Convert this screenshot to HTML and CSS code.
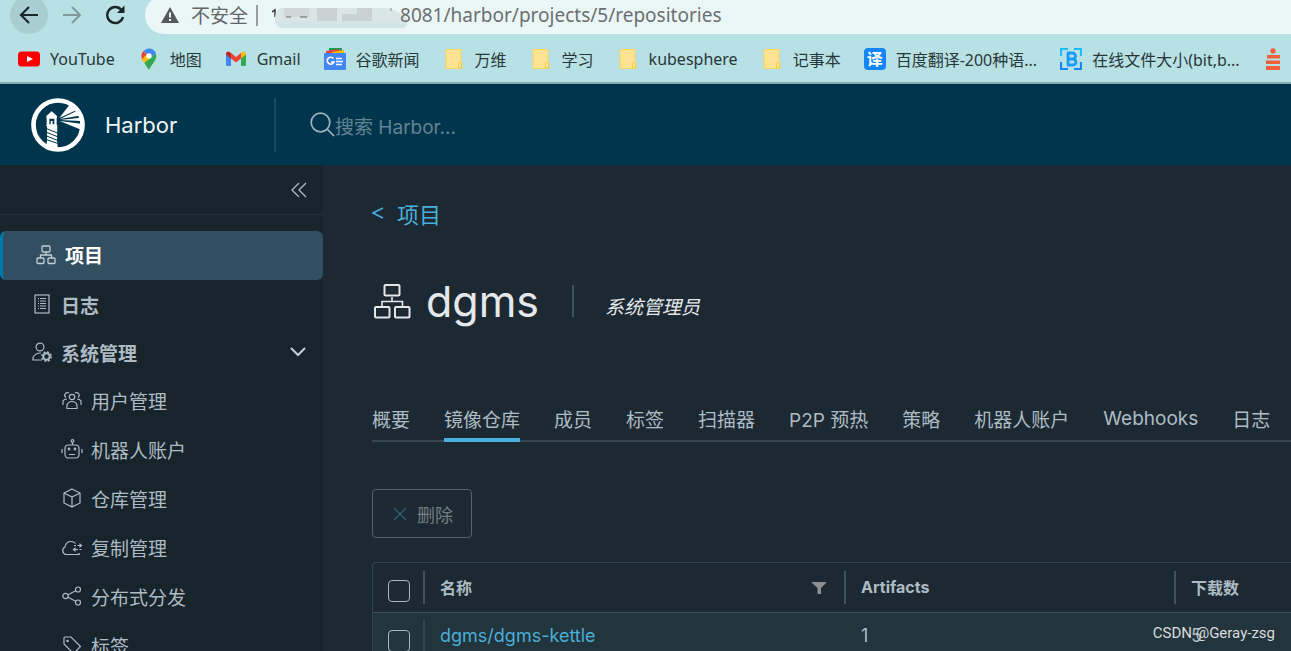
FILE: index.html
```html
<!DOCTYPE html>
<html lang="zh-CN">
<head>
<meta charset="utf-8">
<title>Harbor</title>
<link rel="stylesheet" href="styles.css">
</head>
<body>
<div class="browser">
  <div class="toolbar">
    <button class="nav-btn nav-btn-active" aria-label="后退"><svg width="20" height="20" viewBox="0 0 20 20" fill="none" stroke="#1c2527" stroke-width="2.2"><path d="M19 10H2M10 2L2 10l8 8"/></svg></button>
    <button class="nav-btn" aria-label="前进"><svg width="20" height="20" viewBox="0 0 20 20" fill="none" stroke="#82999c" stroke-width="2"><path d="M1 10h17M10 2l8 8-8 8"/></svg></button>
    <button class="nav-btn" aria-label="重新加载"><svg width="20" height="20" viewBox="0 0 20 20" fill="none" stroke="#1c2527" stroke-width="2.4"><path d="M16.500 5A8 8 0 1 0 18 12"/><path d="M19.500 0.500V8h-7.500z" fill="#1c2527" stroke="none"/></svg></button>
    <div class="address">
      <svg width="18" height="16" viewBox="0 0 18 16"><path d="M9 0l9 16H0z" fill="#55595a"/><path d="M9 5.500v5M9 12v2" stroke="#ebf7f7" stroke-width="2"/></svg>
      <span class="insecure">不安全</span>
      <span class="bar"></span>
      <svg class="mask" width="136" height="24" viewBox="0 0 136 24"><path d="M0 7l3-2v7" fill="none" stroke="#333" stroke-width="1.500"/><path d="M10 3h107l16 8q3 3 2 8-1 4-5 4H10q-7-1-7-10 0-8 7-10z" fill="#dae5e6"/><path d="M45 3h20v13H45zM85 3h15v13H70V9h15z" fill="#c9d1d3"/><path d="M12 3h25v9H12z" fill="#d0d8da"/><path d="M3 16h132q0 7-5 7H10q-6 0-7-7z" fill="#d4e5e7"/><path d="M14 12h5M28 12h7" stroke="#666" stroke-width="1"/><path d="M119 3v3" stroke="#888"/></svg>
      <span class="url">8081/harbor/projects/5/repositories</span>
    </div>
  </div>
  <nav class="bookmarks">
    <a class="bookmark" href="#"><svg width="22" height="22" viewBox="0 0 22 22"><rect y="3.500" width="22" height="15" rx="3.500" fill="#f00"/><path d="M9 8l6 3-6 3z" fill="#fff"/></svg>YouTube</a>
    <a class="bookmark" href="#"><svg width="22" height="22" viewBox="0 0 22 22"><path d="M11 .5a7.500 7.500 0 0 1 7 4.800L12 10 8.500 6l-3-3Q8 .5 11 .5z" fill="#4285f4"/><path d="M5.300 3L9 7l-4.500 5A8 8 0 0 1 5.300 3z" fill="#ea4335"/><path d="M13.500 9.500L6.300 15Q4.700 13 4 11l5-5z" fill="#fbbc04"/><path d="M18 5.300Q19 9 17 12.500L12.500 19 11 22 6.300 15z" fill="#34a853"/><circle cx="11" cy="8" r="2.700" fill="#fff"/></svg>地图</a>
    <a class="bookmark" href="#"><svg width="22" height="22" viewBox="0 0 22 22"><path d="M1 6l5 3.500V18H2.500Q1 18 1 16.500z" fill="#4285f4"/><path d="M21 6l-5 3.500V18h3.500q1.500 0 1.500-1.500z" fill="#34a853"/><path d="M6 5l5 4 5-4v5.500l-5 4-5-4z" fill="#ea4335"/><path d="M1 6.500V5Q2.500 2 6 5v5.500z" fill="#c5221f"/><path d="M21 6.500V5q-1.500-3-5 0v5.500z" fill="#fbbc04"/></svg>Gmail</a>
    <a class="bookmark" href="#"><svg width="22" height="22" viewBox="0 0 22 22"><path d="M5 0h13v6H5z" fill="#0f9d58"/><path d="M2 3l13-2 2 6H2z" fill="#ea4335"/><path d="M8 4l12-2v5H8z" fill="#fbbc04"/><rect y="5" width="22" height="17" rx="1" fill="#4285f4"/><path d="M9.500 10.500A3.500 3.500 0 1 0 10 14H7M12 10.500h6M12 13.500h7M12 16.500h6" fill="none" stroke="#fff" stroke-width="1.600"/></svg>谷歌新闻</a>
    <a class="bookmark" href="#"><svg width="22" height="22" viewBox="0 0 22 22"><path d="M3 1.500h15v12l1 1v6H3z" fill="#fee391" stroke="#f5d568"/><path d="M15.500 20v-5q1.500-2 3 0v5z" fill="#fee391" stroke="#f0cb50"/></svg>万维</a>
    <a class="bookmark" href="#"><svg width="22" height="22" viewBox="0 0 22 22"><path d="M3 1.500h15v12l1 1v6H3z" fill="#fee391" stroke="#f5d568"/><path d="M15.500 20v-5q1.500-2 3 0v5z" fill="#fee391" stroke="#f0cb50"/></svg>学习</a>
    <a class="bookmark" href="#"><svg width="22" height="22" viewBox="0 0 22 22"><path d="M3 1.500h15v12l1 1v6H3z" fill="#fee391" stroke="#f5d568"/><path d="M15.500 20v-5q1.500-2 3 0v5z" fill="#fee391" stroke="#f0cb50"/></svg>kubesphere</a>
    <a class="bookmark" href="#"><svg width="22" height="22" viewBox="0 0 22 22"><path d="M3 1.500h15v12l1 1v6H3z" fill="#fee391" stroke="#f5d568"/><path d="M15.500 20v-5q1.500-2 3 0v5z" fill="#fee391" stroke="#f0cb50"/></svg>记事本</a>
    <a class="bookmark" href="#"><span class="translate-icon">译</span>百度翻译-200种语...</a>
    <a class="bookmark" href="#"><svg width="22" height="22" viewBox="0 0 22 22" fill="none" stroke-width="2.200"><path d="M1 8V1h7M14 1h7v7" stroke="#1cc0f8"/><path d="M1 14v7h7M14 21h7v-7" stroke="#1687fa"/><path d="M7 5h5.500a2.800 2.800 0 0 1 0 6H8M8 5v12M8 11h5a3 3 0 0 1 0 6H7" stroke="#189cf7" stroke-width="2.800"/></svg>在线文件大小(bit,b...</a>
    <a class="bookmark" href="#" aria-label="书签"><svg width="22" height="22" viewBox="0 0 22 22" fill="#f1603d"><circle cx="10" cy="3" r="2.700"/><path d="M4 7h13v3.500H4zM3 12.500h14V16H3zM3 18h14v4H3z"/></svg></a>
  </nav>
</div>

<header class="header">
  <a class="brand" href="#">
    <svg width="54" height="54" viewBox="94 39 162 162"><circle cx="175" cy="120" r="73.500" fill="none" stroke="#fff" stroke-width="14"/><g fill="#fff"><path d="M156 79l-16 14v5h32v-5z"/><path d="M141 96h30v24h2l-1 48 3 25h-37l4-25v-44l-4-4h3zM149 101v17h4v-10h6v10h5v-17z" fill-rule="evenodd"/><path d="M179 99l30-39 22 10-2 6z"/><path d="M181 102l50-24 7 14z"/><path d="M181 105l62-7v10z"/><path d="M180 108l64 8-3 17z"/></g><path d="M141 131l32 13M141 142l32 13M141 153l32 13M141 164l32 11" stroke="#00364d" stroke-width="3"/></svg>
    <span>Harbor</span>
  </a>
  <form class="search">
    <label for="q" aria-label="搜索"><svg width="25" height="25" viewBox="0 0 25 25" fill="none" stroke="#9fb3be" stroke-width="1.700"><circle cx="10.500" cy="10.500" r="9.300"/><path d="M17 17l7 7"/></svg></label>
    <input id="q" type="text" placeholder="搜索 Harbor...">
  </form>
</header>

<div class="layout">
  <aside class="sidebar">
    <div class="collapse"><button aria-label="收起"><svg width="16" height="16" viewBox="0 0 16 16" fill="none" stroke="#adbbc4" stroke-width="1.300"><path d="M8 1L1 8l7 7M15 1L8 8l7 7"/></svg></button></div>
    <nav class="menu">
      <a class="item active" href="#"><svg width="20" height="20" viewBox="0 0 20 20" fill="none" stroke="#c3ced5" stroke-width="1.300"><rect x="6" y="1" width="8" height="6" rx="1"/><rect x="1" y="13" width="7" height="5.500" rx="1"/><rect x="12" y="13" width="7" height="5.500" rx="1"/><path d="M10 7v3M4.500 13v-3h11v3"/></svg>项目</a>
      <a class="item log" href="#"><svg width="16" height="20" viewBox="0 0 16 20" fill="none" stroke="#adbbc4" stroke-width="1.200"><rect x="1" y="1" width="14" height="18"/><path d="M4 4.500h1M4 7h1M4 9.500h1M4 12h1M4 14.500h1M6 4.500h6M6 7h6M6 9.500h6M6 12h6M6 14.500h6"/></svg>日志</a>
      <button class="item admin"><svg width="20" height="20" viewBox="0 0 20 20" fill="none" stroke="#adbbc4" stroke-width="1.200"><circle cx="8" cy="5" r="3.900"/><path d="M10 18H1v-2.500Q3 11 9 11"/><circle cx="14.500" cy="14.500" r="3.200" stroke-width="2"/><circle cx="14.500" cy="14.500" r="4.600" stroke-width="1.600" stroke-dasharray="2 1.610"/></svg>系统管理<svg class="caret" width="16" height="10" viewBox="0 0 16 10" fill="none" stroke="#c3ced5" stroke-width="2"><path d="M1 1l7 7 7-7"/></svg></button>
      <div class="submenu">
        <a class="subitem" href="#"><svg width="22" height="20" viewBox="0 0 22 20" fill="none" stroke="#adbbc4" stroke-width="1.200"><circle cx="11" cy="7" r="2.700"/><path d="M6 18.500v-3.500q1-3.500 5-3.500t5 3.500v3.500zM5 7.500A2.600 2.600 0 1 1 8 3M17 7.500A2.600 2.600 0 1 0 14 3M2 15v-4q1-2 4-2M20 15v-4q-1-2-4-2"/></svg>用户管理</a>
        <a class="subitem" href="#"><svg width="22" height="20" viewBox="0 0 22 20" fill="none" stroke="#adbbc4" stroke-width="1.200"><rect x="4" y="6" width="14" height="13" rx="3.500"/><circle cx="11.500" cy="2" r="1.300"/><path d="M11.500 3.500V6M8 15.500h6M1 10v4M21 10v4"/><circle cx="8" cy="10" r=".8"/><circle cx="14" cy="10" r=".8"/></svg>机器人账户</a>
        <a class="subitem" href="#"><svg width="22" height="20" viewBox="0 0 22 20" fill="none" stroke="#adbbc4" stroke-width="1.200"><path d="M11 1l8 4v10l-8 4-8-4V5zM3 5l8 4 8-4M11 9v10"/></svg>仓库管理</a>
        <a class="subitem" href="#"><svg width="22" height="20" viewBox="0 0 22 20" fill="none" stroke="#adbbc4" stroke-width="1.200"><path d="M19 16.500q-1 1-3 1H5a4 4 0 0 1-1-7.500Q5 4.500 10 4.500q3 0 4.500 2"/><path d="M13 8.500h2M16.500 8.500H21M12 12.500h5M18.500 12.500h2"/><path d="M18.500 6l3 2.500-3 2.500zM14.500 10l-3 2.500 3 2.500z" fill="#adbbc4" stroke="none"/></svg>复制管理</a>
        <a class="subitem" href="#"><svg width="22" height="20" viewBox="0 0 22 20" fill="none" stroke="#adbbc4" stroke-width="1.200"><circle cx="4.500" cy="10" r="2.700"/><circle cx="17" cy="3.500" r="2.500"/><circle cx="17" cy="16.500" r="2.500"/><path d="M7 8.800L14.700 4.700M7 11.200l7.700 4.100"/></svg>分布式分发</a>
        <a class="subitem" href="#"><svg width="22" height="20" viewBox="0 0 22 20" fill="none" stroke="#adbbc4" stroke-width="1.200"><path d="M3 3v6l9.500 9.500 7-7L10 2H4q-1 0-1 1z"/><circle cx="6.500" cy="6" r=".7"/></svg>标签</a>
      </div>
    </nav>
  </aside>

  <main class="main">
    <a class="back" href="#"><svg width="12" height="12" viewBox="0 0 12 12" fill="none" stroke="#49afd9" stroke-width="1.600"><path d="M11 1L1 6l10 5"/></svg>项目</a>
    <div class="title">
      <svg width="38" height="36" viewBox="0 0 38 36" fill="none" stroke="#e4e8eb" stroke-width="2"><rect x="11.500" y="2" width="15" height="10.500" rx="1"/><rect x="2" y="24" width="14.500" height="10.500" rx="1"/><rect x="22" y="24" width="14.500" height="10.500" rx="1"/><path d="M19 14v4.500M9 23v-4.500h20.500V23" stroke-width="1.600"/></svg>
      <h1>dgms</h1>
      <em>系统管理员</em>
    </div>
    <nav class="tabs">
      <button>概要</button><button class="selected">镜像仓库</button><button>成员</button><button>标签</button><button>扫描器</button><button>P2P 预热</button><button>策略</button><button>机器人账户</button><button>Webhooks</button><button>日志</button>
    </nav>
    <button class="delete" disabled><svg width="14" height="14" viewBox="0 0 14 14" fill="none" stroke="#2b5f78" stroke-width="1.400"><path d="M1 1l12 12M13 1L1 13"/></svg>删除</button>
    <div class="grid">
      <table>
        <colgroup><col class="col-check"><col class="col-name"><col class="col-artifacts"><col></colgroup>
        <thead>
          <tr>
            <th><input type="checkbox" aria-label="全选"></th>
            <th><div class="cell">名称<svg width="14" height="14" viewBox="0 0 14 14"><path d="M0 2h14v1L9 8v6H5.500V8L0 3z" fill="#8c8f91"/></svg></div></th>
            <th><div class="cell">Artifacts</div></th>
            <th><div class="cell">下载数</div></th>
          </tr>
        </thead>
        <tbody>
          <tr>
            <td><input type="checkbox" aria-label="选择 dgms/dgms-kettle"></td>
            <td><div class="cell first"><a href="#">dgms/dgms-kettle</a></div></td>
            <td><div class="cell">1</div></td>
            <td><div class="cell">5</div></td>
          </tr>
        </tbody>
      </table>
    </div>
  </main>
</div>
<div class="watermark">CSDN @Geray-zsg</div>
</body>
</html>
```

FILE: styles.css
```css
* { box-sizing: border-box; }
body {
  margin: 0;
  height: 100vh;
  display: flex;
  flex-direction: column;
  overflow: hidden;
  position: relative;
  background: #1c2932;
  color: #adbbc4;
  font-family: Inter, "Noto Sans CJK SC", sans-serif;
  font-size: 19px;
}
a { color: inherit; text-decoration: none; }
button { margin: 0; padding: 0; border: 0; background: none; color: inherit; font: inherit; }
svg { flex: none; display: block; }

.browser {
  flex: none;
  background: #b7e1e4;
  border-bottom: 2px solid #86adb4;
  font-family: "Noto Sans", "Noto Sans CJK SC", sans-serif;
}
.toolbar { display: flex; align-items: center; gap: 5px; height: 38px; margin-top: -4px; padding-left: 10px; }
.nav-btn { display: flex; align-items: center; justify-content: center; width: 38px; height: 38px; border-radius: 50%; }
.nav-btn-active { background: #a8ced2; }
.address {
  flex: 1;
  display: flex;
  align-items: center;
  height: 38px;
  margin-left: 6px;
  padding-left: 16px;
  border-radius: 19px 0 0 19px;
  background: #ebf7f7;
  color: #626667;
  font-size: 19px;
  white-space: nowrap;
}
.insecure { margin-left: 12px; }
.bar { width: 2px; height: 21px; margin: 0 14px 0 8px; background: #9a9fa0; }
.mask { margin: 4px -8px 0 0; }
.url { color: #6b6f70; }
.bookmarks { display: flex; gap: 23px; height: 48px; padding: 1px 0 0 18px; white-space: nowrap; }
.bookmark { display: flex; align-items: center; gap: 10px; color: #27383a; font-size: 16px; }
.translate-icon {
  width: 22px;
  height: 22px;
  border-radius: 4px;
  background: #1585fb;
  color: #fff;
  font-size: 16px;
  font-weight: 700;
  line-height: 22px;
  text-align: center;
}

.header { flex: none; display: flex; align-items: center; height: 81px; background: #00364d; }
.brand { display: flex; align-items: center; gap: 20px; width: 276px; height: 54px; padding-left: 31px; border-right: 2px solid #19495e; color: #f2f5f6; font-size: 22px; }
.search { flex: 1; display: flex; align-items: center; padding-left: 34px; }
.search input { flex: 1; padding: 5px 0 0; border: 0; outline: 0; background: none; color: #fff; font: inherit; }
.search input::placeholder { color: #648291; opacity: 1; }

.layout { flex: 1; min-height: 0; display: flex; }
.sidebar { flex: none; width: 323px; overflow: hidden; background: #18242b; }
.collapse { display: flex; justify-content: flex-end; align-items: center; height: 50px; padding-right: 16px; border-bottom: 1px solid #22313a; }
.menu { padding-top: 16px; }
.item { display: flex; align-items: center; gap: 9px; width: 100%; height: 48px; padding-left: 36px; font-weight: 700; }
.active { height: 49px; padding: 0 0 2px 33px; border-left: 3px solid #0079ad; border-radius: 6px; background: #324f61; color: #fff; }
.log { gap: 11px; padding-left: 34px; }
.admin { padding-left: 32px; }
.caret { margin: 0 17px 0 auto; }
.subitem { display: flex; align-items: center; gap: 8px; height: 49px; padding: 0 0 1px 61px; }

.main { flex: 1; min-width: 0; padding: 34px 0 0 49px; overflow: hidden; }
.back { display: flex; align-items: center; gap: 13px; height: 28px; color: #49afd9; font-size: 22px; }
.title { display: flex; align-items: center; height: 54px; margin-top: 47px; padding-left: 1px; color: #e4e8eb; }
.title h1 { margin: 0 0 0 15px; padding-right: 33px; font-size: 43px; font-weight: 400; line-height: 32px; border-right: 2px solid #42525d; }
.title em { margin-left: 31px; padding-top: 8px; }
.tabs { display: flex; gap: 34px; margin-top: 70px; border-bottom: 2px solid #364752; white-space: nowrap; }
.tabs button { flex: none; height: 44px; margin-bottom: -2px; border-bottom: 4px solid transparent; }
.tabs .selected { border-color: #49afd9; }
.delete { display: flex; align-items: center; gap: 10px; height: 49px; margin-top: 47px; padding: 0 18px 0 20px; border: 1px solid #566169; border-radius: 4px; color: #747d82; font-size: 18px; }
.grid { margin-top: 24px; border: 1px solid #324350; border-right: 0; border-radius: 4px 0 0 0; }
table { width: 100%; table-layout: fixed; border-collapse: collapse; }
.col-check { width: 50px; }
.col-name { width: 421px; }
.col-artifacts { width: 330px; }
th, td { height: 49px; padding: 0; text-align: left; white-space: nowrap; }
th { font-size: 16px; }
thead tr { border-bottom: 1px solid #415463; }
tbody { background: #22343c; font-size: 18px; }
th .cell, td .first { border-left: 2px solid #42525d; }
td .cell { padding-left: 17px; padding-bottom: 3px; }
td .first { padding-left: 15px; border-color: #364752; }
.cell { display: flex; align-items: center; justify-content: space-between; height: 33px; padding: 0 18px 1px 15px; }
td a { color: #49afd9; }
input[type="checkbox"] { appearance: none; display: block; width: 22px; height: 22px; margin: 8px 0 0 15px; border: 1px solid #a9b6be; border-radius: 4px; }

.watermark { position: absolute; right: 16px; bottom: 8px; color: #d9dcdd; font-family: Roboto, sans-serif; font-size: 15px; line-height: 20px; }
```
